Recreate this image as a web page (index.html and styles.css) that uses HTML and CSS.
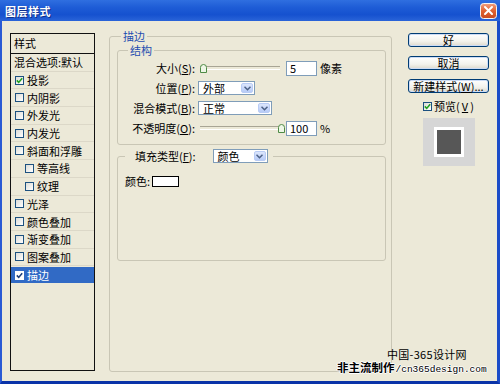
FILE: index.html
```html
<!DOCTYPE html>
<html>
<head>
<meta charset="utf-8">
<title>图层样式</title>
<link rel="stylesheet" href="styles.css">
</head>
<body>
<div class="window">
  <div class="titlebar">
    <span class="title">图层样式</span>
    <span class="close">
      <svg width="17" height="16" viewBox="0 0 17 16">
        <defs>
          <linearGradient id="cg" x1="0" y1="0" x2="0" y2="1">
            <stop offset="0" stop-color="#F0A080"/>
            <stop offset="0.5" stop-color="#E0602F"/>
            <stop offset="1" stop-color="#C84A20"/>
          </linearGradient>
        </defs>
        <rect x="0.5" y="0.5" width="16" height="15" rx="3" fill="url(#cg)" stroke="#F4F4F4"/>
        <path d="M5 4 L12 11 M12 4 L5 11" stroke="#fff" stroke-width="2" stroke-linecap="round"/>
      </svg>
    </span>
  </div>
  <div class="body">
    <div class="stylelist">
      <div class="list-head">样式</div>
      <div class="item plain">混合选项:默认</div>
      <div class="item"><span class="cb checked"><svg width="7" height="7" viewBox="0 0 7 7"><path d="M0.8 3.4 L2.7 5.4 L6.2 1.2" fill="none" stroke="#21A121" stroke-width="1.6"/></svg></span>投影</div>
      <div class="item"><span class="cb"></span>内阴影</div>
      <div class="item"><span class="cb"></span>外发光</div>
      <div class="item"><span class="cb"></span>内发光</div>
      <div class="item"><span class="cb"></span>斜面和浮雕</div>
      <div class="item sub"><span class="cb"></span>等高线</div>
      <div class="item sub"><span class="cb"></span>纹理</div>
      <div class="item"><span class="cb"></span>光泽</div>
      <div class="item"><span class="cb"></span>颜色叠加</div>
      <div class="item"><span class="cb"></span>渐变叠加</div>
      <div class="item"><span class="cb"></span>图案叠加</div>
      <div class="item sel"><span class="cb checked"><svg width="7" height="7" viewBox="0 0 7 7"><path d="M0.8 3.4 L2.7 5.4 L6.2 1.2" fill="none" stroke="#1F3F7A" stroke-width="1.6"/></svg></span>描边</div>
    </div>

    <div class="middle">
      <fieldset class="group outer">
        <legend class="blue">描边</legend>
        <fieldset class="group struct">
          <legend class="blue">结构</legend>
          <div class="form">
            <label class="lbl">大小(<u>S</u>):</label>
            <div class="ctrl">
              <span class="slider"><svg class="thumb at-min" width="7" height="9" viewBox="0 0 7 9"><path d="M0.5 8.5 V3.5 Q0.5 0.5 3.5 0.5 Q6.5 0.5 6.5 3.5 V8.5 Z" fill="#EEF6E6" stroke="#4E8A45"/></svg></span>
              <span class="input">5</span>
              <span class="unit">像素</span>
            </div>
            <label class="lbl">位置(<u>P</u>):</label>
            <div class="ctrl">
              <span class="select w57">外部<span class="arrow"><svg width="7" height="5" viewBox="0 0 7 5"><path d="M0.5 0.8 L3.5 3.8 L6.5 0.8" fill="none" stroke="#4D6185" stroke-width="1.5"/></svg></span></span>
            </div>
            <label class="lbl">混合模式(<u>B</u>):</label>
            <div class="ctrl">
              <span class="select w74">正常<span class="arrow"><svg width="7" height="5" viewBox="0 0 7 5"><path d="M0.5 0.8 L3.5 3.8 L6.5 0.8" fill="none" stroke="#4D6185" stroke-width="1.5"/></svg></span></span>
            </div>
            <label class="lbl">不透明度(<u>O</u>):</label>
            <div class="ctrl">
              <span class="slider"><svg class="thumb at-max" width="7" height="9" viewBox="0 0 7 9"><path d="M0.5 8.5 V3.5 Q0.5 0.5 3.5 0.5 Q6.5 0.5 6.5 3.5 V8.5 Z" fill="#EEF6E6" stroke="#4E8A45"/></svg></span>
              <span class="input">100</span>
              <span class="unit">%</span>
            </div>
          </div>
        </fieldset>
        <fieldset class="group fill">
          <legend class="fill-legend">
            <span class="fill-label">填充类型(<u>F</u>):</span>
            <span class="select w55">颜色<span class="arrow"><svg width="7" height="5" viewBox="0 0 7 5"><path d="M0.5 0.8 L3.5 3.8 L6.5 0.8" fill="none" stroke="#4D6185" stroke-width="1.5"/></svg></span></span>
          </legend>
          <div class="color-row">颜色:<span class="swatch"></span></div>
        </fieldset>
      </fieldset>
    </div>

    <div class="actions">
      <div class="btn">好</div>
      <div class="btn">取消</div>
      <div class="btn">新建样式(<u>W</u>)...</div>
      <div class="preview-check"><span class="cb checked"><svg width="7" height="7" viewBox="0 0 7 7"><path d="M0.8 3.4 L2.7 5.4 L6.2 1.2" fill="none" stroke="#21A121" stroke-width="1.6"/></svg></span>预览(<u>V</u>)</div>
      <div class="preview"><span class="square"></span></div>
    </div>
  </div>
  <div class="watermark">
    <div class="wm1">中国-365设计网</div>
    <div class="wm2"><span class="wm-cn">非主流制作</span><span class="wm-url">/cn365design.com</span></div>
  </div>
</div>
</body>
</html>
```

FILE: styles.css
```css
* { box-sizing: border-box; }

body {
  margin: 0;
  font-family: "Noto Sans CJK SC", "Noto Sans", sans-serif;
  font-size: 11px;
  color: #000;
}

.window {
  position: relative;
  width: 500px;
  height: 384px;
  display: flex;
  flex-direction: column;
  background: #ECE9D8;
  overflow: hidden;
}

.titlebar {
  height: 21px;
  flex: none;
  display: flex;
  align-items: center;
  justify-content: space-between;
  padding: 0 3px 0 5px;
  background: linear-gradient(#2F6FE0 0%, #1E5CD6 35%, #1551CF 70%, #2A64D8 100%);
  color: #fff;
}

.title {
  font-weight: bold;
  font-size: 11px;
  letter-spacing: 0.5px;
  line-height: 12px;
  text-shadow: 1px 1px 0 #0D2E8C;
}

.close { display: flex; }

.body {
  flex: 1;
  display: flex;
  align-items: flex-start;
  padding: 9px 8px 0 8px;
  border-left: 2px solid #2A5AD4;
  border-right: 3px solid #1B4CC8;
  border-bottom: 3px solid #0A33A8;
}

/* left style list */
.stylelist {
  width: 85px;
  height: 338px;
  margin-top: 3px;
  border: 1px solid #111;
  background: #ECE9D8;
  flex: none;
}

.list-head {
  height: 20px;
  border-bottom: 1px solid #111;
  padding-left: 3px;
  line-height: 19px;
}

.item {
  height: 17.7px;
  display: flex;
  align-items: center;
  gap: 3px;
  padding-left: 4px;
  border-bottom: 1px solid #DCD8C8;
  line-height: 12px;
  white-space: nowrap;
}

.item.plain { padding-left: 3px; }
.item.sub { padding-left: 14px; }

.item.sel {
  background: #316AC5;
  color: #fff;
  border-bottom-color: #ECE9D8;
  border-top: 1px solid #ECE9D8;
}

.cb {
  width: 9px;
  height: 9px;
  flex: none;
  border: 1px solid #1C5180;
  background: linear-gradient(135deg, #DCDCD7, #FFFFFF);
  display: inline-flex;
  align-items: center;
  justify-content: center;
}

.sel .cb { background: #fff; border-color: #fff; }

/* middle */
.middle {
  margin-left: 14px;
  width: 283px;
  flex: none;
}

.group {
  margin: 0;
  border: 1px solid #C9C6B5;
  border-radius: 3px;
  min-width: 0;
}

.group legend {
  line-height: 12px;
  font-size: 11px;
}

.blue {
  color: #1F4DB0;
  padding: 0 2px;
}

.outer {
  height: 342px;
  padding: 2px 5px 0 7px;
}

.outer > legend { margin-left: 4px; }

.struct {
  padding: 2px 0 6px 0;
}

.struct > legend { margin-left: 10px; }

.form {
  display: grid;
  grid-template-columns: 77px auto;
  column-gap: 3px;
  grid-auto-rows: 20px;
  align-items: center;
}

.lbl {
  text-align: right;
  white-space: nowrap;
  line-height: 12px;
}

.ctrl {
  display: flex;
  align-items: center;
}

.slider {
  position: relative;
  width: 80px;
  height: 9px;
  margin-left: 2px;
  margin-right: 6px;
  display: flex;
  align-items: center;
}

.slider::before {
  content: "";
  display: block;
  width: 100%;
  height: 2px;
  border-top: 1px solid #A8A595;
  border-bottom: 1px solid #FFFFFF;
}

.thumb {
  position: absolute;
  top: 0;
}

.thumb.at-min { left: 0; }
.thumb.at-max { right: -5px; }

.input {
  width: 31px;
  height: 15px;
  border: 1px solid #7F9DB9;
  background: #fff;
  padding-left: 3px;
  line-height: 13px;
}

.unit {
  margin-left: 3px;
  line-height: 12px;
}

.select {
  position: relative;
  height: 14px;
  border: 1px solid #7F9DB9;
  background: #fff;
  padding-left: 4px;
  line-height: 12px;
  display: flex;
  align-items: center;
}

.select.w57 { width: 57px; }
.select.w74 { width: 74px; }
.select.w55 { width: 55px; }

.arrow {
  position: absolute;
  right: 1px;
  top: 1px;
  bottom: 1px;
  width: 12px;
  border-radius: 2px;
  background: linear-gradient(#DCE6FC, #B7CBF7);
  border: 1px solid #B9CCF5;
  display: flex;
  align-items: center;
  justify-content: center;
}

.fill {
  margin-top: 4px;
  height: 112px;
  padding: 0 0 0 7px;
}

.fill-legend {
  display: flex;
  align-items: center;
  padding: 0 5px 0 10px;
}

.fill-label {
  white-space: nowrap;
  line-height: 12px;
}

.fill-legend .select { margin-left: 17px; }

.color-row {
  margin-top: 12px;
  display: flex;
  align-items: center;
  line-height: 12px;
}

.swatch {
  width: 27px;
  height: 11px;
  margin-left: 2px;
  border: 1px solid #000;
  background: #fff;
}

/* right column */
.actions {
  margin-left: 16px;
  margin-top: 3px;
  width: 81px;
  flex: none;
  display: flex;
  flex-direction: column;
  align-items: center;
}

.btn {
  width: 81px;
  height: 14px;
  margin-bottom: 9px;
  border: 1px solid #003C74;
  border-radius: 3px;
  background: linear-gradient(#FFFFFF, #F3F2EC 60%, #DCD8CC);
  box-shadow: inset 0 0 0 1px #CDDCF5;
  text-align: center;
  line-height: 12px;
  white-space: nowrap;
}

.preview-check {
  margin-top: -2px;
  display: flex;
  align-items: center;
  gap: 2px;
  line-height: 12px;
}

.preview {
  margin-top: 6px;
  width: 52px;
  height: 48px;
  background: #D6D6D6;
  display: flex;
  align-items: center;
  justify-content: center;
}

.square {
  width: 30px;
  height: 30px;
  border: 3px solid #fff;
  background: #575757;
}

/* watermark overlay */
.watermark {
  position: absolute;
  right: 7px;
  bottom: 8px;
  width: 156px;
}

.wm1 {
  font-size: 11px;
  line-height: 12px;
  margin-left: 50px;
  letter-spacing: 0.3px;
}

.wm2 {
  display: flex;
  align-items: baseline;
  line-height: 13px;
  margin-top: 1px;
  white-space: nowrap;
}

.wm-cn {
  font-weight: bold;
  font-size: 11.5px;
  text-shadow: 1px 0 0 #fff, -1px 0 0 #fff, 0 1px 0 #fff, 0 -1px 0 #fff;
}

.wm-url {
  font-family: "Liberation Mono", monospace;
  font-size: 9.5px;
  margin-left: 1px;
  text-shadow: 1px 0 0 #fff, -1px 0 0 #fff, 0 1px 0 #fff, 0 -1px 0 #fff;
}
```
